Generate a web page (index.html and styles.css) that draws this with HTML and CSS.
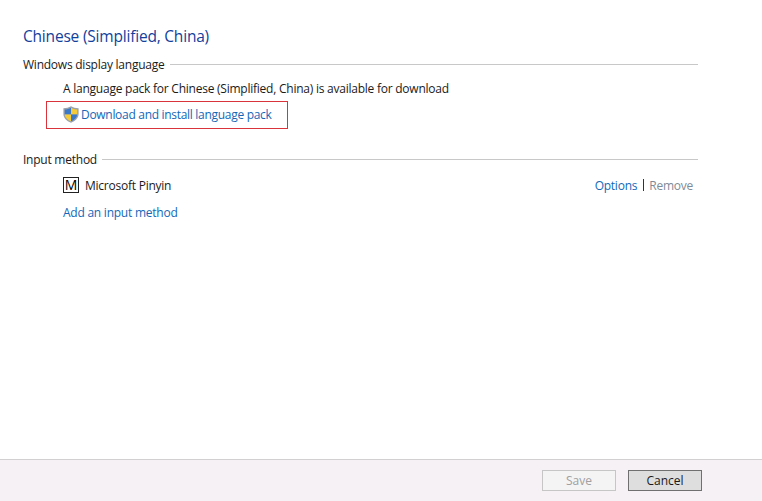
FILE: index.html
```html
<!DOCTYPE html>
<html lang="en">
<head>
    <meta charset="UTF-8">
    <meta name="viewport" content="width=device-width, initial-scale=1.0">
    <title>Language options</title>
    <link rel="stylesheet" href="styles.css">
</head>

<body>
    <main class="content">
        <h1 class="page-title">Chinese (Simplified, China)</h1>

        <div class="section-head">
            <span>Windows display language</span>
        </div>
        <p class="pack-note">A language pack for Chinese (Simplified, China) is available for download</p>
        <div class="download-box">
            <svg class="shield" width="16" height="17" viewBox="0 0 16 17">
                <path d="M8 .3 C10 1.6 12.7 2.2 15.6 2.3 V8 C15.6 12 12.4 15.2 8 16.8 C3.6 15.2 .4 12 .4 8 V2.3 C3.3 2.2 6 1.6 8 .3 Z" fill="#9aa2ad"/>
                <path d="M8 1.8 V8.4 H1.8 V3.6 C4 3.5 6.2 3 8 1.8 Z" fill="#3a78c8"/>
                <path d="M8 1.8 C9.8 3 12 3.5 14.2 3.6 V8.4 H8 Z" fill="#f4cb3a"/>
                <path d="M1.8 8.4 H8 V15.2 C4.6 13.9 2 11.6 1.8 8.4 Z" fill="#f4cb3a"/>
                <path d="M8 8.4 H14.2 C14 11.6 11.4 13.9 8 15.2 Z" fill="#3a78c8"/>
            </svg>
            <a class="link download-link" href="#">Download and install language pack</a>
        </div>

        <div class="section-head input-head">
            <span>Input method</span>
        </div>
        <div class="method-row">
            <span class="method-icon">M</span>
            <span class="method-name">Microsoft Pinyin</span>
            <span class="method-actions">
                <a class="link options-link" href="#">Options</a>
                <span class="sep"></span>
                <span class="disabled">Remove</span>
            </span>
        </div>
        <a class="link add-method" href="#">Add an input method</a>
    </main>

    <footer class="footer">
        <button class="btn" disabled>Save</button>
        <button class="btn btn-cancel">Cancel</button>
    </footer>
</body>
</html>
```

FILE: styles.css
```css
html, body {
    height: 100%;
}

body {
    margin: 0;
    display: flex;
    flex-direction: column;
    background-color: #fff;
    color: #1a1a1a;
    font-family: "Open Sans", "Noto Sans", sans-serif;
    font-size: 12px;
    letter-spacing: -0.24px;
    overflow: hidden;
}

.content {
    flex: 1;
    padding: 26px 64px 0 23px;
}

.page-title {
    margin: 0 0 9px;
    font-size: 15.5px;
    line-height: 21px;
    font-weight: 400;
    letter-spacing: -0.2px;
    color: #12409c;
}

.section-head {
    display: flex;
    align-items: center;
    gap: 5px;
    height: 16px;
}

.section-head::after {
    content: "";
    flex: 1;
    height: 1px;
    background-color: #c8c8c8;
}

.pack-note {
    margin: 9px 0 0 40px;
    line-height: 16px;
}

.download-box {
    display: flex;
    align-items: center;
    gap: 2px;
    box-sizing: border-box;
    width: 242px;
    height: 28px;
    margin: 4px 0 0 23px;
    padding: 0 0 2px 16px;
    border: 1px solid #d9343c;
}

.link {
    color: #1268b8;
    text-decoration: none;
}

.download-link {
    letter-spacing: -0.3px;
}

.options-link {
    margin-right: 1px;
}

.input-head {
    margin-top: 22px;
}

.method-row {
    display: flex;
    align-items: center;
    height: 16px;
    margin: 10px 5px 0 40px;
}

.method-icon {
    box-sizing: border-box;
    width: 16px;
    height: 16px;
    border: 1px solid #222;
    color: #000;
    font-size: 14px;
    line-height: 14px;
    text-align: center;
    letter-spacing: 0;
}

.method-name {
    margin-left: 6px;
}

.method-actions {
    display: flex;
    align-items: center;
    gap: 5px;
    margin-left: auto;
}

.sep {
    width: 1px;
    height: 12px;
    background-color: #333;
}

.disabled {
    color: #7f8a96;
}

.add-method {
    display: block;
    margin: 12px 0 0 40px;
    line-height: 16px;
}

.footer {
    display: flex;
    justify-content: flex-end;
    align-items: center;
    gap: 12px;
    box-sizing: border-box;
    height: 42px;
    padding: 0 60px 1px 0;
    background-color: #f5f1f4;
    border-top: 1px solid #d3d0d2;
}

.btn {
    box-sizing: border-box;
    width: 74px;
    height: 21px;
    padding: 0;
    border: 1px solid #c6c6c6;
    background-color: #f5f4f5;
    color: #a0a0a0;
    font: inherit;
}

.btn-cancel {
    border-color: #707070;
    background-color: #dedede;
    color: #1a1a1a;
}
```
